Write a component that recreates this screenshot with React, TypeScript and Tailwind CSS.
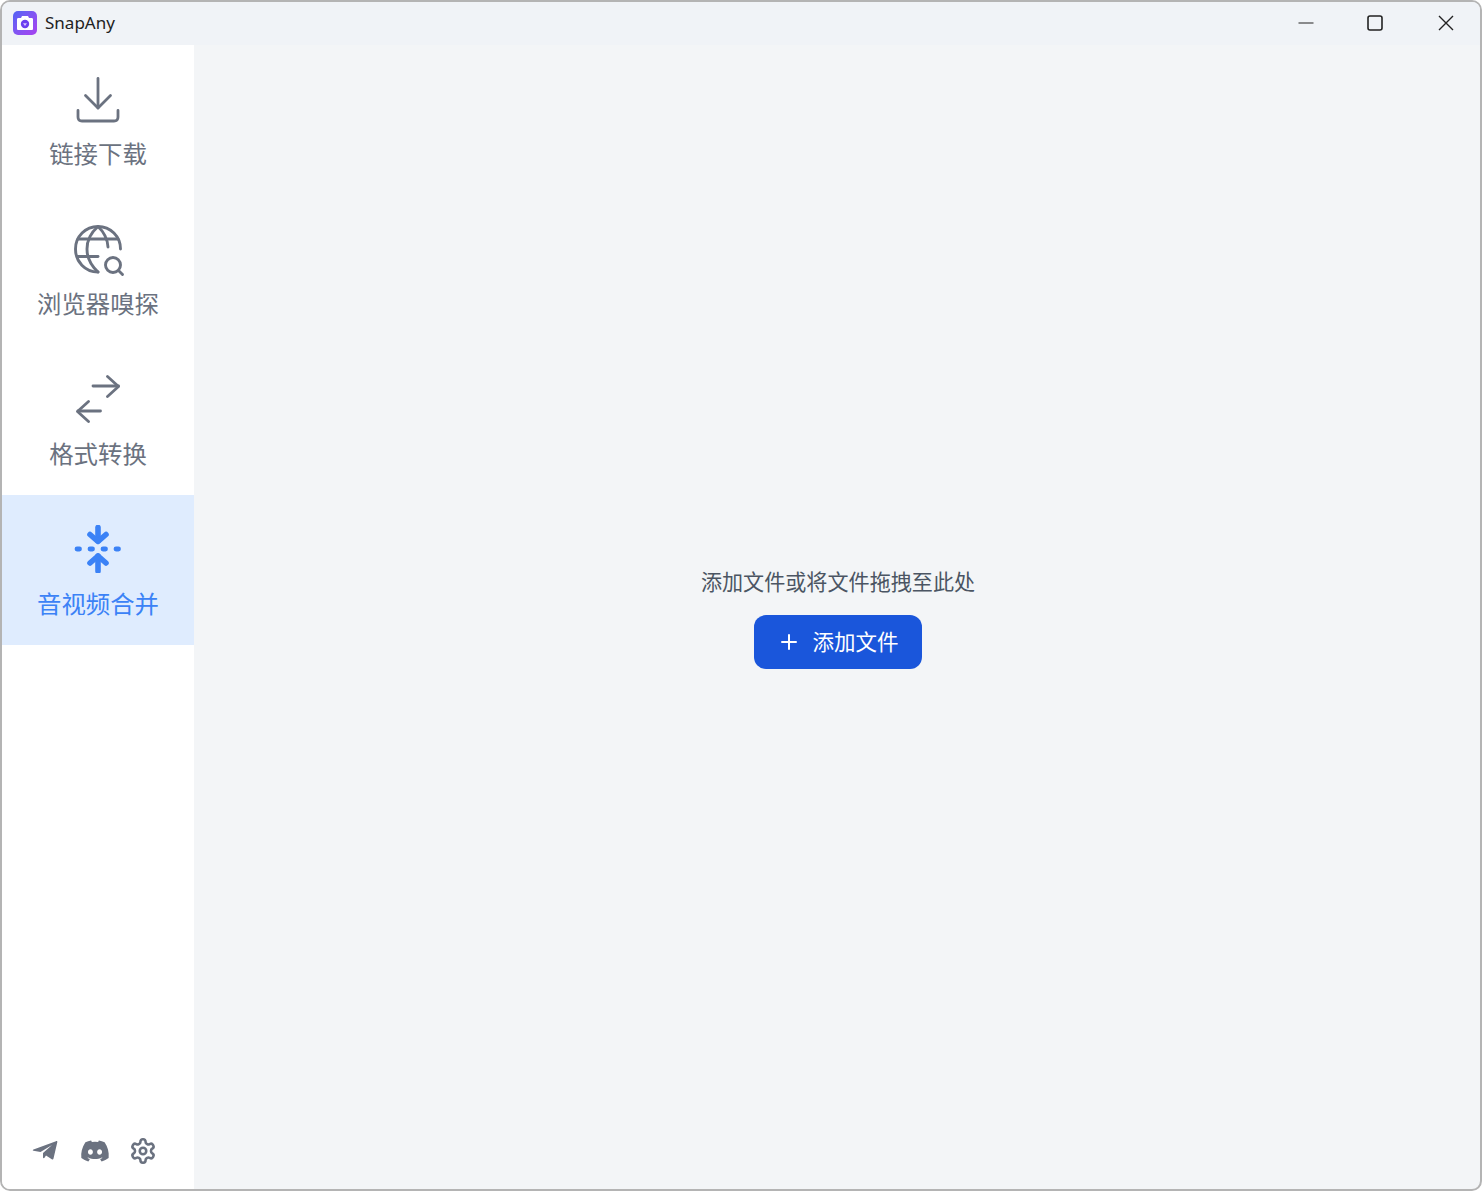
import { FaDiscord } from "react-icons/fa";

const cjk = { fontFamily: '"Noto Sans CJK SC", "Noto Sans", sans-serif' };

function DownloadIcon() {
  return (
    <svg width="48" height="48" viewBox="0 0 48 48" fill="none" stroke="currentColor" strokeWidth="2.8" strokeLinecap="round" strokeLinejoin="round">
      <path d="M24 3.5V33" />
      <path d="M11.500 20.500L24 33L36.500 20.500" />
      <path d="M4 35.500V42C4 44.500 5.500 46 8 46H40C42.500 46 44 44.500 44 42V35.500" />
    </svg>
  );
}

function GlobeSearchIcon() {
  return (
    <svg className="overflow-visible" width="48" height="48" viewBox="0 0 48 48" fill="none" stroke="currentColor" strokeWidth="2.9" strokeLinecap="round" strokeLinejoin="round">
      <path d="M24 47C11 47 1.500 36.500 1.500 24C1.500 11.500 11.500 1.500 24 1.500C36.500 1.500 46.500 11.500 46.500 24" />
      <path d="M24 47C16.500 40 13 32.500 13 24C13 15.500 16.500 8 24 1.500C30.500 7.500 33.500 14.500 34 22" />
      <path d="M4 14H44" />
      <path d="M4 31.500H24" />
      <circle cx="39" cy="40" r="7.500" />
      <path d="M44.500 45.500L48.500 49.500" />
    </svg>
  );
}

function SwapIcon() {
  return (
    <svg width="48" height="48" viewBox="0 0 48 48" fill="none" stroke="currentColor" strokeWidth="2.8" strokeLinecap="round" strokeLinejoin="round">
      <path d="M19 11H44.500" />
      <path d="M33.500 1.500L44.500 11.500L33.500 21.500" />
      <path d="M26.500 36H4" />
      <path d="M14.500 26.500L3.500 36.500L14.500 46.500" />
    </svg>
  );
}

function MergeIcon() {
  return (
    <svg width="48" height="48" viewBox="0 0 48 48" fill="none" stroke="currentColor" strokeLinecap="round" strokeLinejoin="round">
      <g strokeWidth="5.600">
        <path d="M24 2.500V16" />
        <path d="M16 9.500L24 16.500L32 9.500" />
        <path d="M24 46V31" />
        <path d="M16 38L24 31L32 38" />
      </g>
      <path strokeWidth="4.800" d="M3 24H5.500M16 24H18.500M29 24H31.500M42 24H44.500" />
    </svg>
  );
}

function TelegramIcon() {
  return (
    <svg width="28" height="24" viewBox="0 0 28 24" fill="currentColor">
      <path d="M2.500 10.500L25 2.200C26 1.900 26.500 2.500 26.300 3.300L22.500 19.500C22.300 20.500 21.500 20.600 20.800 20.200L15 16.500L13.500 18.800C13 19.500 12 19.200 12 18.400V14L21 6L9.500 13L2.500 11.800C1.500 11.500 1.500 10.800 2.500 10.500Z" />
    </svg>
  );
}

function GearIcon() {
  return (
    <svg className="-ml-[1px]" width="28" height="28" viewBox="0 0 24 24" fill="none" stroke="currentColor" strokeWidth="2.200" strokeLinecap="round" strokeLinejoin="round">
      <path d="M12.220 2h-.440a2 2 0 0 0-2 2v.180a2 2 0 0 1-1 1.730l-.430.250a2 2 0 0 1-2 0l-.150-.080a2 2 0 0 0-2.730.730l-.220.380a2 2 0 0 0 .730 2.730l.150.100a2 2 0 0 1 1 1.720v.510a2 2 0 0 1-1 1.740l-.150.090a2 2 0 0 0-.730 2.730l.220.380a2 2 0 0 0 2.730.730l.150-.080a2 2 0 0 1 2 0l.430.250a2 2 0 0 1 1 1.730V20a2 2 0 0 0 2 2h.440a2 2 0 0 0 2-2v-.180a2 2 0 0 1 1-1.730l.430-.250a2 2 0 0 1 2 0l.150.080a2 2 0 0 0 2.730-.730l.220-.390a2 2 0 0 0-.730-2.730l-.150-.080a2 2 0 0 1-1-1.740v-.500a2 2 0 0 1 1-1.740l.150-.090a2 2 0 0 0 .730-2.730l-.220-.380a2 2 0 0 0-2.730-.730l-.150.080a2 2 0 0 1-2 0l-.430-.250a2 2 0 0 1-1-1.730V4a2 2 0 0 0-2-2z" />
      <circle cx="12" cy="12" r="2.800" />
    </svg>
  );
}

const navItems = [
  { icon: DownloadIcon, label: "链接下载" },
  { icon: GlobeSearchIcon, label: "浏览器嗅探" },
  { icon: SwapIcon, label: "格式转换" },
  { icon: MergeIcon, label: "音视频合并", active: true },
];

export default function App() {
  return (
    <div className="h-screen w-full overflow-hidden bg-white">
      <div className="flex h-full flex-col overflow-hidden rounded-[10px] border-2 border-[#b4b4b4] bg-[#f3f5f7]" style={cjk}>
        {/* Title bar */}
        <div className="flex h-[43px] shrink-0 items-center justify-between bg-[#f0f3f7] pb-[2px]">
          <div className="flex items-center pl-[11px]">
            <div className="flex h-6 w-6 items-center justify-center rounded-[5px] bg-gradient-to-br from-[#4f63f5] to-[#a83ff0]">
              <svg width="18" height="16" viewBox="0 0 18 16">
                <path d="M6 1H12L13 3H15.500C16.500 3 17 3.500 17 4.500V13.500C17 14.500 16.500 15 15.500 15H2.500C1.500 15 1 14.500 1 13.500V4.500C1 3.500 1.500 3 2.500 3H5Z" fill="#fff" />
                <circle cx="9" cy="9" r="4.200" fill="#6d3ff0" />
                <path d="M7 8.200H11L9 11Z" fill="#d8c8ff" />
              </svg>
            </div>
            <span className="ml-2 text-[17px] text-[#222]" style={{ fontFamily: '"Noto Sans", sans-serif' }}>SnapAny</span>
          </div>
          <div className="flex items-center pr-[26px]">
            <svg width="16" height="16" viewBox="0 0 16 16" fill="none" stroke="#222" strokeWidth="1.200">
              <path d="M0.500 8H15.500" />
            </svg>
            <svg className="ml-[53px]" width="16" height="16" viewBox="0 0 16 16" fill="none" stroke="#222" strokeWidth="1.600">
              <rect x="1" y="1" width="14" height="14" rx="2" />
            </svg>
            <svg className="ml-[55px]" width="16" height="16" viewBox="0 0 16 16" fill="none" stroke="#222" strokeWidth="1.400">
              <path d="M1 1L15 15M15 1L1 15" />
            </svg>
          </div>
        </div>

        <div className="flex min-h-0 flex-1">
          {/* Sidebar */}
          <aside className="flex w-[192px] shrink-0 flex-col justify-between bg-white">
            <nav className="flex flex-col">
              {navItems.map((item) => (
                <div
                  key={item.label}
                  className={
                    item.active
                      ? "flex h-[150px] flex-col items-center bg-[#dfecfe] pt-[30px] text-[#3b82f6]"
                      : "flex h-[150px] flex-col items-center pt-[30px] text-[#6b7280]"
                  }
                >
                  <div className="flex h-12 w-12 items-center justify-center">
                    <item.icon />
                  </div>
                  <span className="mt-[14px] whitespace-nowrap text-[24.400px] leading-8">{item.label}</span>
                </div>
              ))}
            </nav>
            <div className="flex items-center gap-5 pb-[23px] pl-[29px] text-[#6b7280]">
              <TelegramIcon />
              <FaDiscord size={30} className="ml-[1px]" />
              <GearIcon />
            </div>
          </aside>

          {/* Main */}
          <main className="flex flex-1 flex-col items-center justify-center pb-[1px] pl-[2px]">
            <p className="text-[21.100px] leading-8 text-[#4b5563]">添加文件或将文件拖拽至此处</p>
            <button className="mt-[18px] flex h-[54px] w-[168px] items-center justify-center gap-[14px] rounded-xl bg-[#1a56db] pl-[3px] text-[21.500px] text-white">
              <svg width="18" height="18" viewBox="0 0 18 18" fill="none" stroke="currentColor" strokeWidth="2" strokeLinecap="round">
                <path d="M9 2V16M2 9H16" />
              </svg>
              添加文件
            </button>
          </main>
        </div>
      </div>
    </div>
  );
}
